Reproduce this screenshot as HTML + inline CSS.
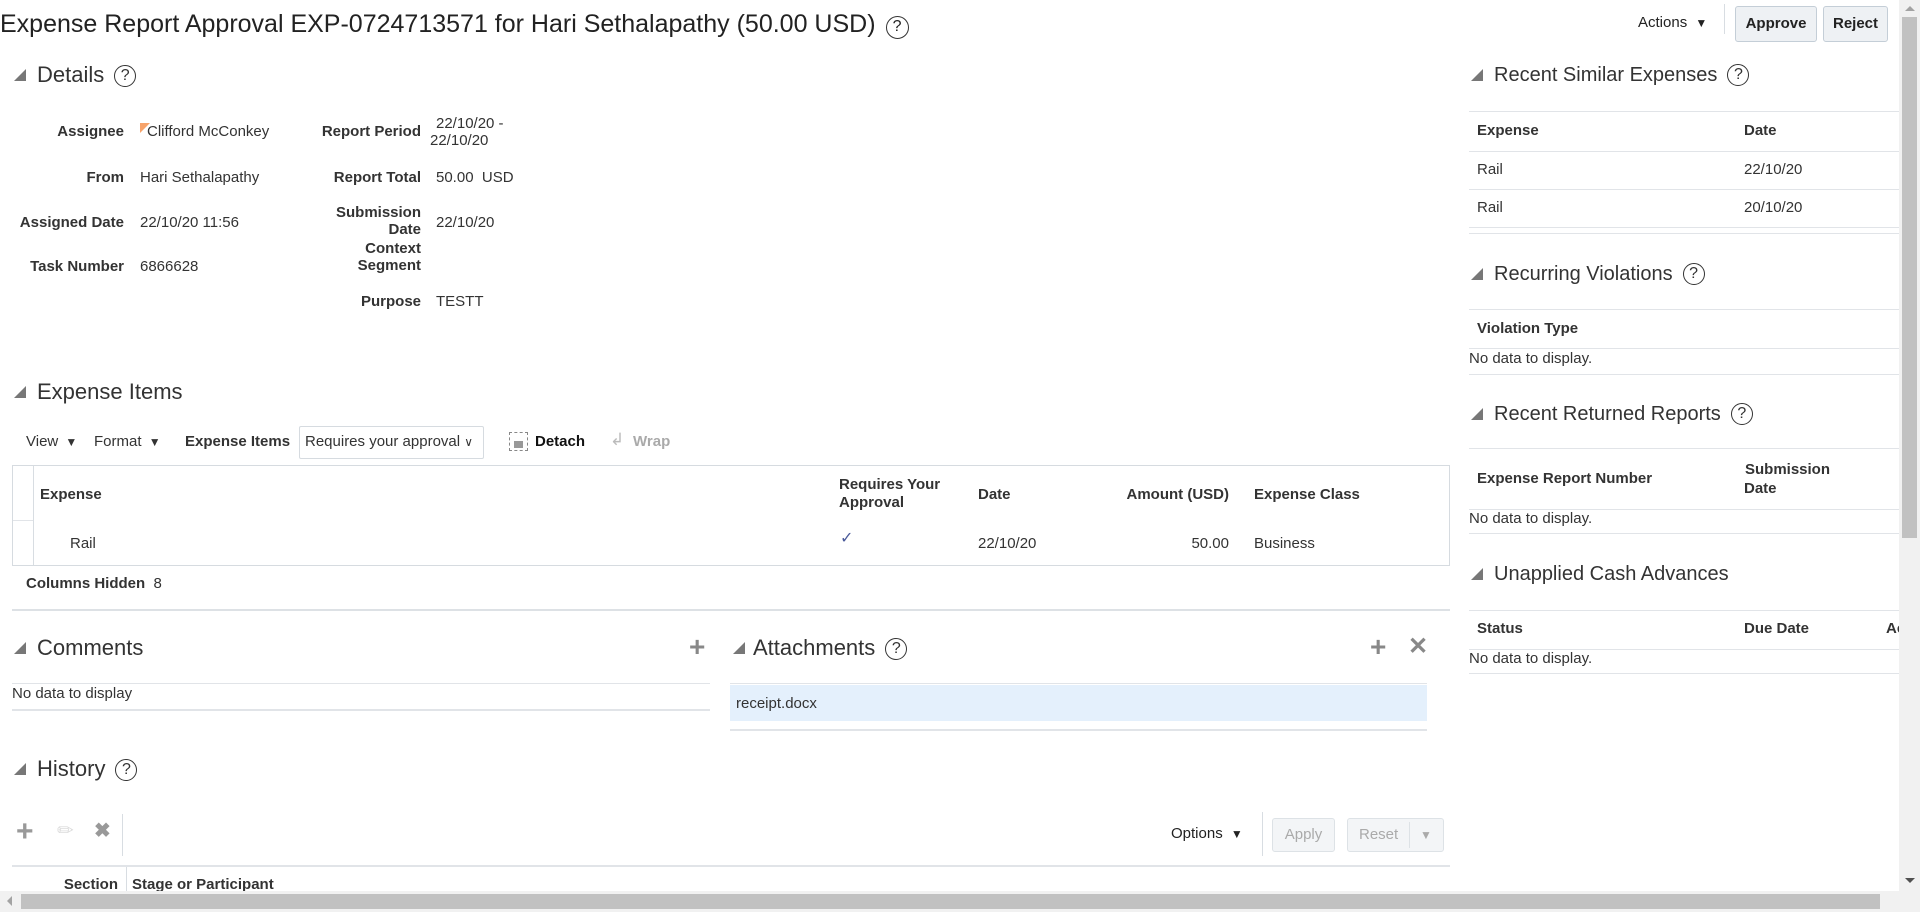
<!DOCTYPE html>
<html><head><meta charset="utf-8"><style>
*{margin:0;padding:0;box-sizing:border-box}
body{width:1920px;height:912px;overflow:hidden;background:#fff;font-family:"Liberation Sans",Arial,sans-serif;color:#333;position:relative;font-size:15px}
.t{position:absolute;white-space:nowrap;line-height:18px}
.b{font-weight:bold}
.r{text-align:right}
.h{position:absolute;white-space:nowrap;font-size:22px;line-height:26px;color:#333}
.hr{position:absolute;white-space:nowrap;font-size:20px;line-height:24px;color:#333}
.tri{position:absolute;width:0;height:0;border-left:12px solid transparent;border-bottom:12px solid #777}
.q{display:inline-block;width:22px;height:22px;border:1.6px solid #333;border-radius:50%;font-size:16px;line-height:19px;text-align:center;vertical-align:2px;margin-left:10px;font-weight:normal}
.ln{position:absolute;height:1px;background:#e1e4e8}
.vl{position:absolute;width:1px;background:#d8dde2}
.btn{position:absolute;border:1px solid #c4ced7;border-radius:3px;background:#eef1f4;font-weight:bold;font-size:15px;text-align:center;color:#222}
</style></head><body>

<div class="t" style="left:0;top:10px;font-size:25px;line-height:28px;color:#222">Expense Report Approval EXP-0724713571 for Hari Sethalapathy (50.00 USD)<span class="q" style="width:23px;height:23px;vertical-align:1px;font-size:16px">?</span></div>

<div class="t" style="left:1638px;top:14px;color:#222">Actions <span style="font-size:12px;margin-left:4px">▼</span></div>
<div class="vl" style="left:1724px;top:4px;height:30px"></div>
<div class="btn" style="left:1735px;top:6px;width:82px;height:36px;line-height:34px">Approve</div>
<div class="btn" style="left:1823px;top:6px;width:65px;height:36px;line-height:34px">Reject</div>

<!-- Details -->
<div class="tri" style="left:14px;top:69px"></div>
<div class="h" style="left:37px;top:62px">Details<span class="q">?</span></div>

<div class="t b r" style="left:0;width:124px;top:123px">Assignee</div>
<div style="position:absolute;left:140px;top:123px;width:0;height:0;border-top:10px solid #f7a36b;border-right:10px solid transparent"></div>
<div class="t" style="left:147px;top:123px">Clifford McConkey</div>
<div class="t b r" style="left:0;width:124px;top:169px">From</div>
<div class="t" style="left:140px;top:169px">Hari Sethalapathy</div>
<div class="t b r" style="left:0;width:124px;top:214px">Assigned Date</div>
<div class="t" style="left:140px;top:214px">22/10/20 11:56</div>
<div class="t b r" style="left:0;width:124px;top:258px">Task Number</div>
<div class="t" style="left:140px;top:258px">6866628</div>

<div class="t b r" style="left:250px;width:171px;top:123px">Report Period</div>
<div class="t" style="left:436px;top:115px">22/10/20 -</div>
<div class="t" style="left:430px;top:132px">22/10/20</div>
<div class="t b r" style="left:250px;width:171px;top:169px">Report Total</div>
<div class="t" style="left:436px;top:169px">50.00&nbsp;&nbsp;USD</div>
<div class="t b r" style="left:250px;width:171px;top:204px">Submission</div>
<div class="t b r" style="left:250px;width:171px;top:221px">Date</div>
<div class="t" style="left:436px;top:214px">22/10/20</div>
<div class="t b r" style="left:250px;width:171px;top:240px">Context</div>
<div class="t b r" style="left:250px;width:171px;top:257px">Segment</div>
<div class="t b r" style="left:250px;width:171px;top:293px">Purpose</div>
<div class="t" style="left:436px;top:293px">TESTT</div>

<!-- Expense Items -->
<div class="tri" style="left:14px;top:386px"></div>
<div class="h" style="left:37px;top:379px">Expense Items</div>
<div class="t" style="left:26px;top:433px">View <span style="font-size:12px;margin-left:3px">▼</span></div>
<div class="t" style="left:94px;top:433px">Format <span style="font-size:12px;margin-left:3px">▼</span></div>
<div class="t b" style="left:185px;top:433px">Expense Items</div>
<div style="position:absolute;left:299px;top:426px;width:185px;height:33px;border:1px solid #d6dbe0;border-radius:2px"></div>
<div class="t" style="left:305px;top:433px">Requires your approval <span style="font-size:12px">&#8744;</span></div>
<div style="position:absolute;left:509px;top:432px;width:19px;height:19px;border:1.5px dashed #888"></div>
<div style="position:absolute;left:514px;top:441px;width:9px;height:7px;background:#999"></div>
<div class="t b" style="left:535px;top:433px;color:#111">Detach</div>
<div class="t" style="left:610px;top:431px;color:#bbb;font-size:17px">&#8626;</div>
<div class="t b" style="left:633px;top:433px;color:#aaa">Wrap</div>

<div style="position:absolute;left:12px;top:465px;width:1438px;height:101px;border:1px solid #d6dbe0"></div>
<div class="vl" style="left:33px;top:466px;height:99px"></div>
<div class="ln" style="left:13px;top:520px;width:20px"></div>
<div class="t b" style="left:40px;top:486px">Expense</div>
<div class="t b" style="left:839px;top:476px">Requires Your</div>
<div class="t b" style="left:839px;top:494px">Approval</div>
<div class="t b" style="left:978px;top:486px">Date</div>
<div class="t b r" style="left:1080px;width:149px;top:486px">Amount (USD)</div>
<div class="t b" style="left:1254px;top:486px">Expense Class</div>
<div class="t" style="left:70px;top:535px">Rail</div>
<div class="t" style="left:840px;top:530px;color:#4a5a9a;font-size:16px">&#10003;</div>
<div class="t" style="left:978px;top:535px">22/10/20</div>
<div class="t r" style="left:1150px;width:79px;top:535px">50.00</div>
<div class="t" style="left:1254px;top:535px">Business</div>
<div class="t" style="left:26px;top:575px"><b>Columns Hidden</b>&nbsp; 8</div>
<div class="ln" style="left:12px;top:609px;width:1438px;background:#dde1e5;height:2px"></div>

<!-- Comments -->
<div class="tri" style="left:14px;top:642px"></div>
<div class="h" style="left:37px;top:635px">Comments</div>
<div class="t b" style="left:689px;top:638px;font-size:28px;color:#888">+</div>
<div class="ln" style="left:12px;top:683px;width:698px"></div>
<div class="t" style="left:12px;top:685px">No data to display</div>
<div class="ln" style="left:12px;top:709px;width:698px;height:2px"></div>

<div class="tri" style="left:733px;top:642px"></div>
<div class="h" style="left:753px;top:635px">Attachments<span class="q">?</span></div>
<div class="t b" style="left:1370px;top:638px;font-size:28px;color:#888">+</div>
<div class="t b" style="left:1408px;top:638px;font-size:24px;color:#888">&#10005;</div>
<div class="ln" style="left:730px;top:683px;width:697px"></div>
<div style="position:absolute;left:730px;top:685px;width:697px;height:36px;background:#e4f0fc"></div>
<div class="t" style="left:736px;top:695px">receipt.docx</div>
<div class="ln" style="left:730px;top:729px;width:697px;height:2px"></div>

<!-- History -->
<div class="tri" style="left:14px;top:763px"></div>
<div class="h" style="left:37px;top:756px">History<span class="q">?</span></div>
<div class="t b" style="left:16px;top:817px;font-size:30px;color:#999;line-height:30px">+</div>
<div class="t" style="left:57px;top:822px;font-size:20px;color:#ddd">&#9999;</div>
<div class="t b" style="left:94px;top:822px;font-size:20px;color:#999">&#10006;</div>
<div class="vl" style="left:122px;top:814px;height:42px"></div>
<div class="t" style="left:1171px;top:825px;color:#222">Options <span style="font-size:12px;margin-left:4px">▼</span></div>
<div class="vl" style="left:1262px;top:812px;height:44px"></div>
<div class="btn" style="left:1272px;top:818px;width:63px;height:34px;line-height:32px;color:#aaa;font-weight:normal;background:#f3f5f7;border-color:#dde2e6">Apply</div>
<div class="btn" style="left:1347px;top:818px;width:97px;height:34px;line-height:32px;color:#aaa;font-weight:normal;background:#f3f5f7;border-color:#dde2e6;text-align:left;padding-left:11px">Reset<span style="position:absolute;left:61px;top:3px;width:1px;height:26px;background:#dde2e6"></span><span style="position:absolute;left:72px;top:0;font-size:12px">▼</span></div>
<div class="ln" style="left:12px;top:865px;width:1438px;height:2px"></div>
<div class="vl" style="left:126px;top:867px;height:30px"></div>
<div class="t b r" style="left:40px;width:78px;top:876px">Section</div>
<div class="t b" style="left:132px;top:876px">Stage or Participant</div>

<!-- Right panel -->
<div class="tri" style="left:1471px;top:69px"></div>
<div class="hr" style="left:1494px;top:63px">Recent Similar Expenses<span class="q">?</span></div>
<div class="ln" style="left:1469px;top:111px;width:430px"></div>
<div class="t b" style="left:1477px;top:122px">Expense</div>
<div class="t b" style="left:1744px;top:122px">Date</div>
<div class="ln" style="left:1469px;top:151px;width:430px"></div>
<div class="t" style="left:1477px;top:161px">Rail</div>
<div class="t" style="left:1744px;top:161px">22/10/20</div>
<div class="ln" style="left:1469px;top:189px;width:430px"></div>
<div class="t" style="left:1477px;top:199px">Rail</div>
<div class="t" style="left:1744px;top:199px">20/10/20</div>
<div class="ln" style="left:1469px;top:227px;width:430px"></div>
<div class="ln" style="left:1469px;top:233px;width:430px"></div>

<div class="tri" style="left:1471px;top:268px"></div>
<div class="hr" style="left:1494px;top:262px">Recurring Violations<span class="q">?</span></div>
<div class="ln" style="left:1469px;top:309px;width:430px"></div>
<div class="t b" style="left:1477px;top:320px">Violation Type</div>
<div class="ln" style="left:1469px;top:348px;width:430px"></div>
<div class="t" style="left:1469px;top:350px">No data to display.</div>
<div class="ln" style="left:1469px;top:374px;width:430px"></div>

<div class="tri" style="left:1471px;top:408px"></div>
<div class="hr" style="left:1494px;top:402px">Recent Returned Reports<span class="q">?</span></div>
<div class="ln" style="left:1469px;top:448px;width:430px"></div>
<div class="t b" style="left:1477px;top:470px">Expense Report Number</div>
<div class="t b" style="left:1745px;top:461px">Submission</div>
<div class="t b" style="left:1744px;top:480px">Date</div>
<div class="ln" style="left:1469px;top:509px;width:430px"></div>
<div class="t" style="left:1469px;top:510px">No data to display.</div>
<div class="ln" style="left:1469px;top:533px;width:430px"></div>

<div class="tri" style="left:1471px;top:568px"></div>
<div class="hr" style="left:1494px;top:562px">Unapplied Cash Advances</div>
<div class="ln" style="left:1469px;top:610px;width:430px"></div>
<div class="t b" style="left:1477px;top:620px">Status</div>
<div class="t b" style="left:1744px;top:620px">Due Date</div>
<div class="t b" style="left:1886px;top:620px;width:13px;overflow:hidden">Ac</div>
<div class="ln" style="left:1469px;top:649px;width:430px"></div>
<div class="t" style="left:1469px;top:650px">No data to display.</div>
<div class="ln" style="left:1469px;top:673px;width:430px"></div>

<!-- scrollbars -->
<div style="position:absolute;left:1899px;top:0;width:21px;height:891px;background:#f1f1f1"></div>
<div style="position:absolute;left:1902px;top:17px;width:15px;height:521px;background:#c1c1c1"></div>
<div style="position:absolute;left:1905px;top:6px;width:0;height:0;border-left:5px solid transparent;border-right:5px solid transparent;border-bottom:5px solid #a3a3a3"></div>
<div style="position:absolute;left:1905px;top:878px;width:0;height:0;border-left:5px solid transparent;border-right:5px solid transparent;border-top:5px solid #505050"></div>
<div style="position:absolute;left:0;top:891px;width:1920px;height:21px;background:#f1f1f1"></div>
<div style="position:absolute;left:21px;top:894px;width:1859px;height:15px;background:#c1c1c1"></div>
<div style="position:absolute;left:7px;top:896px;width:0;height:0;border-top:5px solid transparent;border-bottom:5px solid transparent;border-right:5px solid #a3a3a3"></div>
</body></html>
